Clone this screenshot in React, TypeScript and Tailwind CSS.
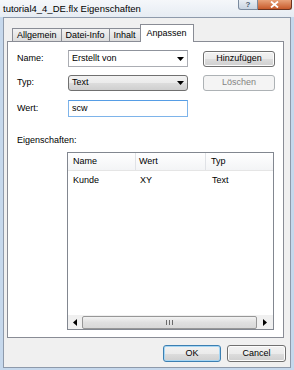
import React from 'react';

const font = { fontFamily: '"Liberation Sans", Arial, sans-serif' };

const Arrow = ({ className = '' }: { className?: string }) => (
  <svg width="7" height="4" viewBox="0 0 7 4" className={className}>
    <path d="M0 0h7L3.5 4z" fill="#000" />
  </svg>
);

const Button = ({ label, disabled = false, primary = false, className = '' }: { label: string; disabled?: boolean; primary?: boolean; className?: string }) => {
  if (disabled) {
    return (
      <div className={`flex items-center justify-center rounded-[3px] border border-[#adb2b5] bg-[#f4f4f4] text-[#838383] ${className}`}>
        {label}
      </div>
    );
  }
  return (
    <div
      className={`flex items-center justify-center rounded-[3px] border ${
        primary ? 'border-[#3c7fb1] shadow-[inset_0_0_0_1px_#a6d6f4]' : 'border-[#707070] shadow-[inset_0_0_0_1px_#fcfcfc]'
      } bg-[linear-gradient(#f2f2f2_0%,#ebebeb_50%,#dddddd_51%,#cfcfcf_100%)] text-black ${className}`}
    >
      {label}
    </div>
  );
};

const Tab = ({ label, selected = false }: { label: string; selected?: boolean }) =>
  selected ? (
    <div className="h-[18px] -mb-px -ml-px px-[6px] pt-[2px] border border-b-0 border-[#898c95] bg-white relative z-10">
      {label}
    </div>
  ) : (
    <div className="h-[13px] px-[4px] border border-b-0 border-[#898c95] -ml-px first:ml-0 bg-[linear-gradient(#f2f2f2,#dcdcdc)] leading-[12px]">
      {label}
    </div>
  );

const App = () => {
  return (
    <div className="w-[294px] h-[370px] bg-[#c6d8ec] flex flex-col overflow-hidden text-[9px] text-black" style={font}>
      {/* Title bar */}
      <div className="h-[17px] flex items-start bg-[linear-gradient(#f5f7fa,#e6ecf3)]">
        <div className="pl-[3px] pt-[2px] text-[9.5px] text-black">tutorial4_4_DE.flx Eigenschaften</div>
        <div className="ml-auto mr-[2px] flex">
          <div className="w-[20px] h-[10px] rounded-bl-[3px] border border-t-0 border-[#7a8a9e] bg-[linear-gradient(#e9eef4,#c9d4e1)] flex items-center justify-center text-[8px] leading-none text-[#4a5a70] font-bold">
            ?
          </div>
          <div className="w-[34px] h-[10px] rounded-br-[3px] border border-t-0 border-l-0 border-[#6d3420] bg-[linear-gradient(#e8a27a,#c75a2b)] flex items-center justify-center">
            <svg width="9" height="7" viewBox="0 0 9 7">
              <path d="M1 0.5l7 6M8 0.5l-7 6" stroke="#fff" strokeWidth="1.8" />
            </svg>
          </div>
        </div>
      </div>

      {/* Client area */}
      <div className="mx-[3px] h-[351px] border border-[#8e9aab] bg-[#f0f0f0] flex flex-col">
        {/* Tabs */}
        <div className="flex items-end pt-[5px] pl-[8px] h-[23px]">
          <Tab label="Allgemein" />
          <Tab label="Datei-Info" />
          <Tab label="Inhalt" />
          <Tab label="Anpassen" selected />
        </div>

        {/* Panel */}
        <div className="ml-[3px] w-[277px] h-[297px] border border-[#898c95] bg-white pl-[9px] pt-[8px] flex flex-col">
          <div className="flex items-center h-[17px]">
            <div className="w-[51px]">Name:</div>
            <div className="w-[120px] h-[17px] border border-[#abadb3] border-t-[#8f939c] bg-white flex items-center pl-[3px] pr-[3px]">
              <span>Erstellt von</span>
              <Arrow className="ml-auto" />
            </div>
            <Button label="Hinzufügen" className="ml-[15px] w-[72px] h-[16px]" />
          </div>

          <div className="flex items-center h-[16px] mt-[8px]">
            <div className="w-[51px]">Typ:</div>
            <div className="w-[120px] h-[16px] rounded-[3px] border border-[#707070] bg-[linear-gradient(#f2f2f2_0%,#ebebeb_50%,#dddddd_51%,#cfcfcf_100%)] flex items-center pl-[3px] pr-[3px]">
              <span>Text</span>
              <Arrow className="ml-auto" />
            </div>
            <Button label="Löschen" disabled className="ml-[15px] w-[72px] h-[16px]" />
          </div>

          <div className="flex items-center h-[17px] mt-[9px]">
            <div className="w-[51px]">Wert:</div>
            <div className="w-[120px] h-[17px] border border-[#7eb4ea] border-t-[#569de5] bg-white flex items-center pl-[3px]">
              scw
            </div>
          </div>

          <div className="mt-[18px] h-[11px] leading-[11px]">Eigenschaften:</div>

          {/* List view */}
          <div className="mt-[6px] ml-[50px] w-[207px] h-[178px] border border-[#828790] bg-white flex flex-col">
            <div className="h-[18px] flex bg-[linear-gradient(#ffffff,#f3f4f6)] border-b border-[#e5e5e5]">
              <div className="w-[68px] pl-[5px] flex items-center border-r border-[#e0e2e6]">Name</div>
              <div className="w-[70px] pl-[3px] flex items-center border-r border-[#e0e2e6]">Wert</div>
              <div className="flex-1 pl-[5px] flex items-center">Typ</div>
            </div>
            <div className="h-[16px] mt-[2px] flex items-center">
              <div className="w-[68px] pl-[5px]">Kunde</div>
              <div className="w-[70px] pl-[4px]">XY</div>
              <div className="flex-1 pl-[6px]">Text</div>
            </div>

            {/* Horizontal scrollbar */}
            <div className="mt-auto h-[14px] bg-[#f0f0f0] flex items-center">
              <div className="w-[14px] h-[14px] flex items-center justify-center">
                <svg width="4" height="7" viewBox="0 0 4 7">
                  <path d="M4 0v7L0 3.5z" fill="#000" />
                </svg>
              </div>
              <div className="w-[175px] h-[13px] rounded-[2px] border border-[#979797] bg-[linear-gradient(#f3f3f3,#e0e0e0_50%,#d8d8d8)] flex items-center justify-center">
                <svg width="7" height="5" viewBox="0 0 7 5">
                  <path d="M0.5 0v5M3.5 0v5M6.5 0v5" stroke="#6b6b6b" strokeWidth="1" />
                </svg>
              </div>
              <div className="flex-1 h-[14px] flex items-center justify-center">
                <svg width="4" height="7" viewBox="0 0 4 7">
                  <path d="M0 0v7L4 3.5z" fill="#000" />
                </svg>
              </div>
            </div>
          </div>
        </div>

        {/* Dialog buttons */}
        <div className="flex justify-end gap-[6px] mt-[7px] pr-[4px]">
          <Button label="OK" primary className="w-[58px] h-[17px]" />
          <Button label="Cancel" className="w-[59px] h-[17px]" />
        </div>
      </div>
    </div>
  );
};

export default App;
